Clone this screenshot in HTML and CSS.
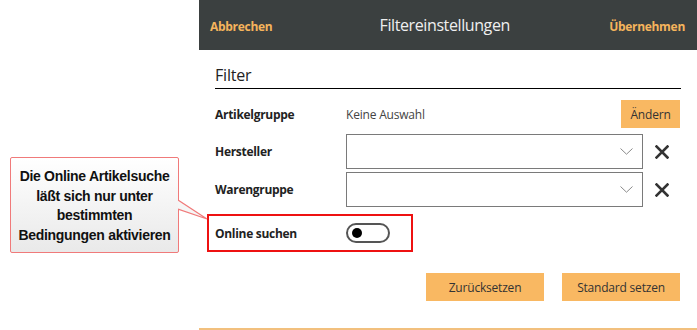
FILE: index.html
```html
<!DOCTYPE html>
<html lang="de">
<head>
<meta charset="utf-8">
<title>Filtereinstellungen</title>
<link rel="stylesheet" href="styles.css">
</head>
<body>
<div class="page">
  <aside class="aside">
    <div class="callout">
      Die Online Artikelsuche<br>läßt sich nur unter<br>bestimmten<br>Bedingungen aktivieren
    </div>
    <svg class="pointer" width="40" height="30" viewBox="0 0 40 30">
      <polygon points="0,2 29,21 0,11" fill="#f6f6f6" stroke="none"/>
      <polyline points="0,2 29,21 0,11" fill="none" stroke="#f07a7a" stroke-width="1.2"/>
    </svg>
  </aside>
  <main class="panel">
    <header class="header">
      <span class="hbtn">Abbrechen</span>
      <span class="title">Filtereinstellungen</span>
      <span class="hbtn">Übernehmen</span>
    </header>
    <section class="content">
      <h2 class="section-title">Filter</h2>
      <div class="row row-art">
        <span class="label">Artikelgruppe</span>
        <span class="value">Keine Auswahl</span>
        <button class="btn btn-small">Ändern</button>
      </div>
      <div class="row row-combo">
        <span class="label">Hersteller</span>
        <div class="combo">
          <svg class="chev" width="13" height="7" viewBox="0 0 13 7"><polyline points="0.5,0.5 6.5,6.2 12.5,0.5" fill="none" stroke="#8a8a8a" stroke-width="1"/></svg>
        </div>
        <svg class="xicon" width="14" height="14" viewBox="0 0 14 14"><path d="M1.5 1.5 L12.5 12.5 M12.5 1.5 L1.5 12.5" stroke="#333" stroke-width="2.6" stroke-linecap="square"/></svg>
      </div>
      <div class="row row-combo">
        <span class="label">Warengruppe</span>
        <div class="combo">
          <svg class="chev" width="13" height="7" viewBox="0 0 13 7"><polyline points="0.5,0.5 6.5,6.2 12.5,0.5" fill="none" stroke="#8a8a8a" stroke-width="1"/></svg>
        </div>
        <svg class="xicon" width="14" height="14" viewBox="0 0 14 14"><path d="M1.5 1.5 L12.5 12.5 M12.5 1.5 L1.5 12.5" stroke="#333" stroke-width="2.6" stroke-linecap="square"/></svg>
      </div>
      <div class="row-online">
        <span class="label">Online suchen</span>
        <span class="toggle"><span class="knob"></span></span>
      </div>
      <div class="actions">
        <button class="btn btn-wide">Zurücksetzen</button>
        <button class="btn btn-wide">Standard setzen</button>
      </div>
    </section>
    <div class="bottom-line"></div>
  </main>
</div>
</body>
</html>
```

FILE: styles.css
```css
* { box-sizing: border-box; }
html, body { margin: 0; padding: 0; background: #fff; }
body { font-family: "Open Sans", "Noto Sans", sans-serif; color: #222; }

.page { display: flex; width: 697px; height: 330px; overflow: hidden; }

.aside { position: relative; width: 199px; flex: none; padding: 157px 0 0 10px; }
.callout {
  width: 169px; height: 96px;
  border: 1.5px solid #f07a7a; border-radius: 2px;
  background: linear-gradient(#ffffff, #e9e9e9);
  font-family: "Liberation Sans", Arial, sans-serif; font-weight: bold;
  font-size: 14px; line-height: 19.5px; letter-spacing: -0.3px;
  color: #111; text-align: center;
  padding-top: 9px;
}
.pointer { position: absolute; left: 178px; top: 198px; }

.panel { width: 498px; flex: none; display: flex; flex-direction: column; }
.header {
  height: 50px; background: #3b4040;
  display: flex; align-items: center; justify-content: space-between;
  padding: 0 12px 0 11px;
}
.hbtn { color: #f5b45c; font-weight: bold; font-size: 12px; letter-spacing: -0.3px; padding-top: 2px; }
.title { color: #efefef; font-size: 16px; padding-left: 8px; letter-spacing: -0.4px; }

.content { flex: 1; padding: 13px 17px 0 16px; }
.section-title {
  margin: 0; font-weight: normal; font-size: 16px; color: #222;
  line-height: 25px; border-bottom: 1px solid #000;
  height: 26px; margin-right: -1px; letter-spacing: -0.2px;
}

.row { display: flex; align-items: center; }
.label { width: 131px; flex: none; font-weight: bold; font-size: 12px; color: #222; letter-spacing: -0.3px; }
.value { flex: 1; font-size: 12px; color: #444; letter-spacing: -0.2px; }
.row-art { margin-top: 11px; height: 28px; }
.row-combo { height: 35px; margin-top: 6px; }
.row-combo + .row-combo { margin-top: 3px; }

.combo {
  width: 297px; height: 35px; border: 1px solid #7a7a7a; background: #fff;
  display: flex; align-items: center; justify-content: flex-end; padding-right: 9px;
}
.xicon { margin-left: 12px; }

.row-online {
  display: flex; align-items: center; width: 206px; height: 38px;
  margin: 7px 0 0 -8px; border: 2px solid #ee1111; padding-left: 6px;
}
.toggle {
  width: 44px; height: 20px; border: 2px solid #555; border-radius: 10px;
  display: flex; align-items: center; padding-left: 4px;
}
.knob { width: 10px; height: 10px; border-radius: 50%; background: #000; }

.btn {
  background: #f9b862; border: none; color: #333; font-family: inherit;
  font-size: 12px; padding: 0; cursor: pointer; letter-spacing: -0.2px;
}
.btn-small { width: 59px; height: 28px; }
.actions { display: flex; justify-content: flex-end; gap: 18px; margin-top: 21px; }
.btn-wide { width: 118px; height: 28px; }

.bottom-line { height: 2px; background: #f2c07e; margin-top: auto; }
```
